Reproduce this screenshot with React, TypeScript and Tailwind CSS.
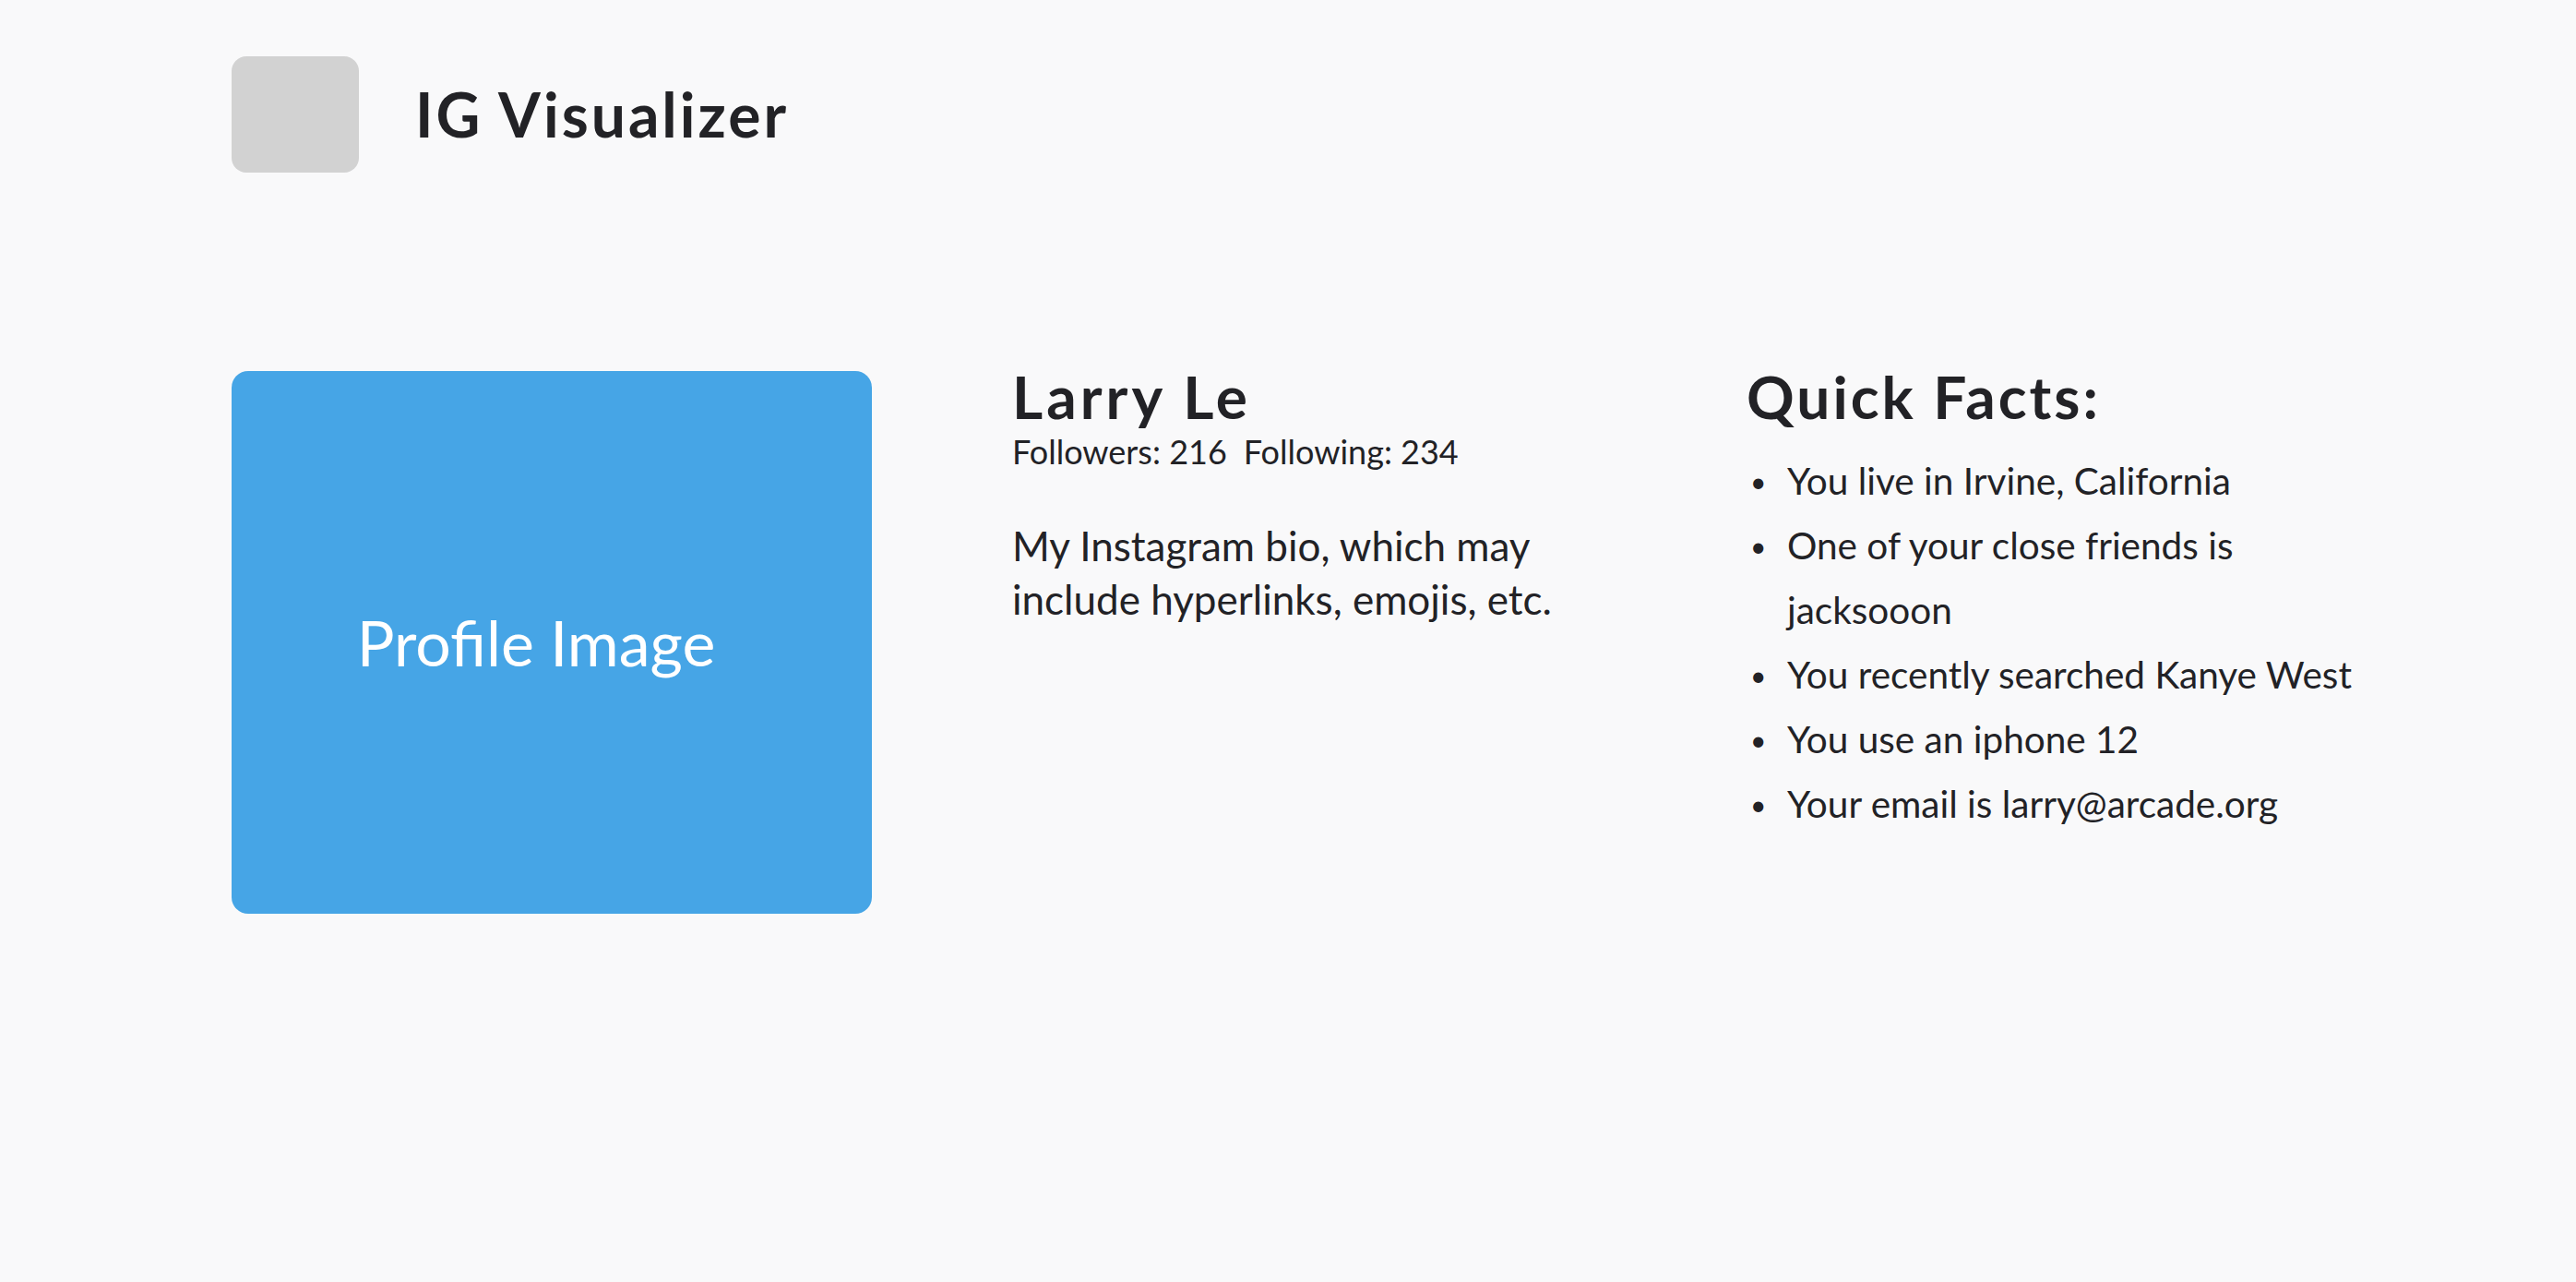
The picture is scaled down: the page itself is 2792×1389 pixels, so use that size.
import React from "react";

const facts = [
  "You live in Irvine, California",
  "One of your close friends is jacksooon",
  "You recently searched Kanye West",
  "You use an iphone 12",
  "Your email is larry@arcade.org",
];

export default function App() {
  return (
    <div
      className="min-h-screen bg-[#f9f9fa] text-[#222226]"
      style={{ fontFamily: "Lato, 'Noto Sans', sans-serif" }}
    >
      <div className="pl-[251px] pt-[61px]">
        {/* header */}
        <div className="flex items-center gap-[61px]">
          <div className="w-[138px] h-[126px] rounded-[16px] bg-[#d2d2d2]" />
          <h1 className="text-[66px] leading-none font-bold tracking-[3px]">
            IG Visualizer
          </h1>
        </div>

        {/* profile */}
        <div className="flex mt-[215px]">
          <div className="w-[694px] h-[588px] rounded-[18px] bg-[#46a5e6] flex items-center justify-center">
            <span className="text-white text-[68px] font-normal pr-[34px]">
              Profile Image
            </span>
          </div>

          <div className="ml-[152px] w-[796px]">
            <h2 className="text-[64px] leading-[56px] font-bold tracking-[4px]">
              Larry Le
            </h2>
            <div className="text-[36px] leading-[40px] mt-[11px] flex gap-[18px]">
              <span>Followers: 216</span>
              <span>Following: 234</span>
            </div>
            <p className="text-[44px] leading-[58px] mt-[53px] w-[640px]">
              My Instagram bio, which may include hyperlinks, emojis, etc.
            </p>
          </div>

          <div className="w-[700px]">
            <h2 className="text-[64px] leading-[56px] font-bold tracking-[3px]">
              Quick Facts:
            </h2>
            <ul className="mt-[28px] text-[40.5px] leading-[70px]">
              {facts.map((f) => (
                <li key={f} className="flex">
                  <span className="w-[44px] shrink-0 pl-[4px] text-[30px]">
                    •
                  </span>
                  <span className="w-[625px]">{f}</span>
                </li>
              ))}
            </ul>
          </div>
        </div>
      </div>
    </div>
  );
}
